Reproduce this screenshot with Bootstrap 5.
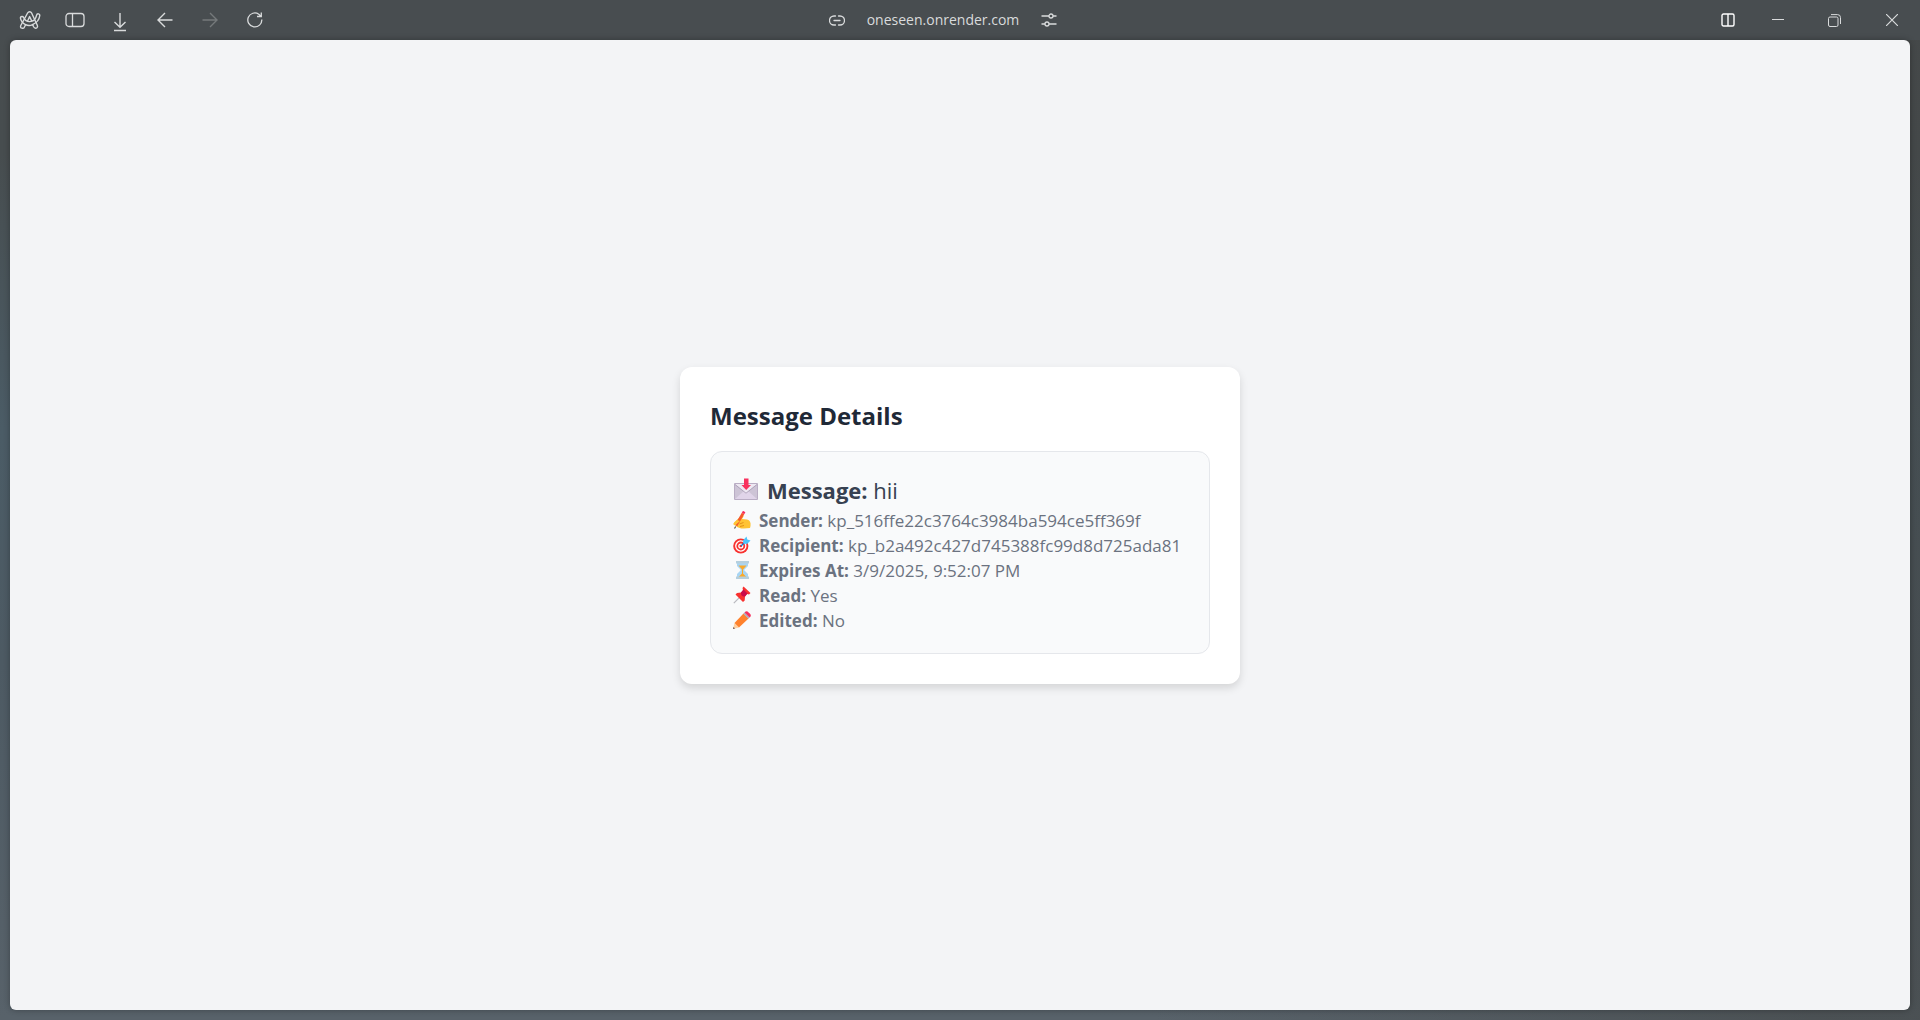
<!DOCTYPE html>
<html lang="en">
<head>
<meta charset="utf-8">
<meta name="viewport" content="width=device-width, initial-scale=1">
<title>Message Details</title>
<link href="https://cdn.jsdelivr.net/npm/bootstrap@5.3.0/dist/css/bootstrap.min.css" rel="stylesheet">
<style>
body { font-family: "Open Sans", "Noto Sans", sans-serif; color: #6b7280; background: linear-gradient(90deg, transparent 60%, #42454599 95%), linear-gradient(180deg, #484d4f 0%, #474d4f 15%, #4b5c66 42%, #4d5a63 65%, #58626a 100%); }
.topbar { display: grid; grid-template-columns: 1fr auto 1fr; height: 40px; background: #484d50; color: #d9dbdc; }
.tools { padding-left: 7px; }
.tool { width: 45px; height: 40px; padding: 0; border: 0; background: none; color: inherit; display: flex; align-items: center; justify-content: center; }
.tool:disabled { color: #75797b; }
.tool-window { width: 57px; }
.tool-split { width: 43px; color: #fff; }
.address { font-size: 14px; line-height: 20px; padding-right: 34px; }
.address .tool { width: 16px; }
.address-host { padding: 0 22px; }
svg { flex: none; }
.tool svg { fill: none; stroke: currentColor; }
.viewport { background: #f3f4f6; border-radius: 6px; margin: 0 10px 10px; box-shadow: 0 0 6px rgba(0,0,0,.3); }
.panel { width: 560px; padding: 30px; border-radius: 12px; background: #fff; box-shadow: 0 4px 8px rgba(0,0,0,.13); }
.panel-title { font-size: 24px; line-height: 38px; font-weight: 700; color: #1f2937; margin-bottom: 16px; }
.details { border: 1px solid #e5e7eb; border-radius: 12px; background: #f9fafb; padding: 20px 22px; font-size: 17px; line-height: 25px; }
.headline { font-size: 22px; line-height: 36px; color: #374151; }
.entry { display: flex; align-items: center; gap: 8px; white-space: nowrap; }
</style>
<script src="https://cdn.jsdelivr.net/npm/bootstrap@5.3.0/dist/js/bootstrap.bundle.min.js"></script>
</head>
<body class="min-vh-100 d-flex flex-column">
<header class="topbar">
  <nav class="tools d-flex" aria-label="Browser">
    <button class="tool" aria-label="Menu"><svg width="22" height="20" viewBox="0 0 22 20" stroke-width="1.4" stroke-linejoin="round" stroke-linecap="round"><path d="M3 18.2c-1.4-.4-1.800-1.500-1.200-2.700L8.600 3c.9-1.700 3.200-1.700 4 0l5.700 12.200c.7 1.600-.2 2.900-1.500 3-1 .1-1.700-.4-2.200-1.400l-1-2.200c-2.300 1.200-4.900 1.100-7 .1l-1.300 2.600c-.5.900-1.400 1.200-2.300.9z"/><path d="M1.400 7.800c.2-1.500 2.500-1.800 3.200-.3 1.100 2.500 3.300 4.100 6 4.100 4 0 6.300-3 7-6.500.4-1.900 3.400-1.600 3.200.4-.5 4-2.900 7.200-7.200 9.100M1.400 7.800c.4 2.600 2.100 5.200 5.200 6.900M8.600 11l2-4.400 2.300 4.600"/></svg></button>
    <button class="tool" aria-label="Sidebar"><svg width="20" height="16" viewBox="0 0 20 16" stroke-width="1.300"><rect x="1" y="1.500" width="18" height="13" rx="3"/><path d="M7.500 1.500v13"/></svg></button>
    <button class="tool" aria-label="Downloads"><svg class="mt-1" width="14" height="20" viewBox="0 0 14 20" stroke-width="1.400"><path d="M7 1v14M1.500 10 7 15.300 12.500 10M1 18.500h12"/></svg></button>
    <button class="tool" aria-label="Back"><svg width="16" height="16" viewBox="0 0 16 16" stroke-width="1.400"><path d="M15.500 8H1M8 1 1 8l7 7"/></svg></button>
    <button class="tool" aria-label="Forward" disabled><svg width="16" height="16" viewBox="0 0 16 16" stroke-width="1.400"><path d="M.5 8H15M8 1l7 7-7 7"/></svg></button>
    <button class="tool" aria-label="Reload"><svg width="16" height="16" viewBox="0 0 16 16" stroke-width="1.300"><path d="M14.800 7.500A7 7 0 1 1 11.800 2.200l2.200 2M14.300.500v4H10"/></svg></button>
  </nav>
  <div class="address d-flex align-items-center">
    <button class="tool" aria-label="Copy link"><svg width="16" height="11" viewBox="0 0 16 11" stroke-width="1.300" stroke-linecap="round"><path d="M6.500 1H5a4.500 4.500 0 0 0 0 9h1.500M9.500 1H11a4.500 4.500 0 0 1 0 9H9.500M5 5.500h6"/></svg></button>
    <span class="address-host">oneseen.onrender.com</span>
    <button class="tool" aria-label="Site settings"><svg width="16" height="14" viewBox="0 0 16 14" stroke-width="1.300"><path d="M.5 3H8M12 3h3.500M.5 11H4M8 11h7.500"/><circle cx="10" cy="3" r="2"/><circle cx="6" cy="11" r="2"/></svg></button>
  </div>
  <div class="d-flex justify-content-end">
    <button class="tool tool-split" aria-label="Split view"><svg width="14" height="14" viewBox="0 0 14 14" stroke-width="1.400"><rect x="1" y="1" width="12" height="12" rx="1.500"/><path d="M7 1v12"/></svg></button>
    <button class="tool tool-window" aria-label="Minimize"><svg width="12" height="12" viewBox="0 0 12 12"><path d="M0 5.500h12"/></svg></button>
    <button class="tool tool-window" aria-label="Restore"><svg width="13" height="13" viewBox="0 0 13 13"><rect x=".5" y="3" width="9.500" height="9.500" rx="1.500"/><path d="M3 .6h6.500a3 3 0 0 1 3 3V10"/></svg></button>
    <button class="tool tool-window" aria-label="Close"><svg width="12" height="12" viewBox="0 0 12 12" stroke-width="1.200"><path d="m0 0 12 12M12 0 0 12"/></svg></button>
  </div>
</header>
<main class="viewport flex-grow-1 d-flex align-items-center justify-content-center">
  <section class="panel">
    <h1 class="panel-title">Message Details</h1>
    <div class="details">
      <div class="entry headline">
        <svg width="26" height="24" viewBox="0 0 26 24"><rect x="1" y="5" width="24" height="17" rx="1" fill="#b9adc4"/><path fill="#cdc4d6" d="M2 6h22v15H2z"/><path fill="#e0d4e9" d="m2 21 9-8h4l9 8z"/><path fill="#eee8f2" d="M2 6h22l-11 9z"/><path fill="none" stroke="#a69bb2" stroke-width=".8" d="m2 6.500 11 8.700L24 6.500"/><path fill="#f8315e" d="M11 .5h4.500V7H18l-4.800 5L8.500 7H11z"/></svg>
        <span><strong>Message:</strong> hii</span>
      </div>
      <div class="entry">
        <svg width="18" height="18" viewBox="0 0 18 18"><path fill="#ffc334" d="M1 11.500 6 7l3-2.500c1.500-.8 2 .5 1.200 1.600L9 8l5 .5c3 .7 4 3 3.500 6.500l-.5 2-6 .5c-3 .2-5-.5-7-1.500l-2-2z"/><path fill="none" stroke="#e08a15" stroke-width=".9" d="m6.500 13 4-1.500M7 15.500l4-1"/><path stroke="#f45a2b" stroke-width="2.800" d="M3 14.500 10 2.500"/><path stroke="#f72b59" stroke-width="2.800" d="m10 2.500 1.200-2"/><path stroke="#554" stroke-width="1.200" d="m1.500 17.500 1.200-2"/><path fill="#ffc334" d="m0 13 4-4 3 1-5 4.500z"/></svg>
        <span><strong>Sender:</strong> kp_516ffe22c3764c3984ba594ce5ff369f</span>
      </div>
      <div class="entry">
        <svg width="18" height="18" viewBox="0 0 18 18"><circle cx="7.800" cy="10" r="7.600" fill="#f8312f"/><circle cx="7.800" cy="10" r="5.700" fill="#fff"/><circle cx="7.800" cy="10" r="4.400" fill="#f8312f"/><circle cx="7.800" cy="10" r="2.600" fill="#fff"/><circle cx="7.800" cy="10" r="1.300" fill="#f8312f"/><path stroke="#0b78cc" stroke-width="1.200" d="m8 10 5-5"/><path fill="#4fc3fa" d="m10.500 7.500-.5-3L13.500.500l.8 3 3.200 1L14 8z"/></svg>
        <span><strong>Recipient:</strong> kp_b2a492c427d745388fc99d8d725ada81</span>
      </div>
      <div class="entry">
        <svg width="18" height="18" viewBox="0 0 18 18"><path fill="#a8d5f4" d="M4 2h11v3l-4 4 4 4v3H4v-3l4-4-4-4z"/><path fill="#f9a92b" d="M5.500 4.500h8L10 8.500v4l3.500 3.500h-8L9 12.500v-4z"/><path fill="#b5cfdd" d="M3 0h13v2.500H3zM3 15.500h13V18H3z"/></svg>
        <span><strong>Expires At:</strong> 3/9/2025, 9:52:07 PM</span>
      </div>
      <div class="entry">
        <svg width="18" height="18" viewBox="0 0 18 18"><path stroke="#b9b9bf" stroke-width="1.200" d="m.8 17.200 6-6"/><path fill="#f8312f" d="m10.500.500 7 6.500-1.500 1.500-2-.5-2 2.500-.3 4-1.700 1.500L2.500 8.500 4 7l4-.500 2-2.200-.5-2.300z"/><path fill="#ca0b4a" d="m8 6.500 2.500-3 4 4L12 10.500c-2.500.5-4.500-1.500-4-4z"/></svg>
        <span><strong>Read:</strong> Yes</span>
      </div>
      <div class="entry">
        <svg width="18" height="18" viewBox="0 0 18 18"><path fill="#ffd0a0" d="m0 18 1.500-6 4.500 4.500z"/><path fill="#5c4a50" d="m0 18 .5-2 1.500 1.500z"/><path fill="#ff822d" d="m1.500 12 9-9.500 5 5-9.500 9z"/><path fill="#b4acbc" d="m10.300 2.700 1.500-1.500 5 5-1.500 1.500z"/><path fill="#f8315e" d="M11.600 1.400c1.300-1.500 2.600-1.500 4 0l1.200 1.200c1.500 1.300 1.300 2.500 0 3.800z"/></svg>
        <span><strong>Edited:</strong> No</span>
      </div>
    </div>
  </section>
</main>
</body>
</html>
